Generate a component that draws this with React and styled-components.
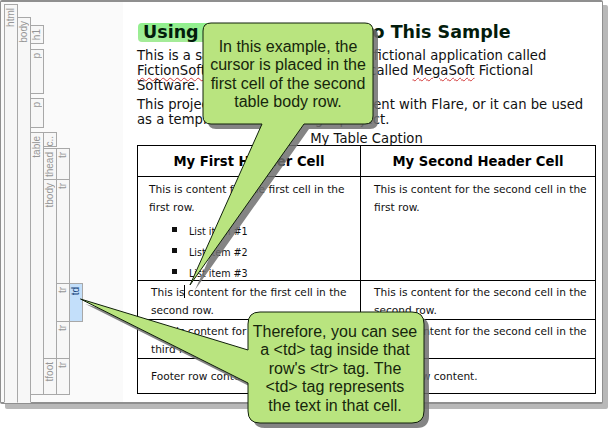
import styled, { createGlobalStyle } from "styled-components";

const GlobalStyle = createGlobalStyle`
	html, body {
		margin: 0;
		padding: 0;
		background: #fff;
	}
`;

const Page = styled.div`
	position: relative;
	width: 608px;
	height: 437px;
	overflow: hidden;
	background: #fff;
`;

const Frame = styled.div`
	display: flex;
	box-sizing: border-box;
	width: 603px;
	height: 404px;
	background: #fff;
	border: 1px solid #8f8f8f;
	border-top-width: 2px;
	border-bottom-width: 2px;
	border-radius: 2px;
	box-shadow: 5px 5px 0 #b8b8b8;
`;

const Structure = styled.div`
	display: flex;
	flex: none;
	box-sizing: border-box;
	width: 122px;
	padding-left: 3px;
	background: #fafafa;
`;

const Column = styled.div`
	display: flex;
	flex-direction: column;
	flex: none;
	width: 13px;
`;

const Gap = styled.div`
	flex: none;
	height: ${(p) => p.$h}px;
`;

const Segment = styled.div`
	display: flex;
	justify-content: center;
	align-items: flex-start;
	flex: none;
	box-sizing: border-box;
	width: 14px;
	height: ${(p) => p.$h}px;
	margin-bottom: -1px;
	padding-top: 3px;
	border: 1px solid #a8a8a8;
	border-bottom-color: ${(p) => (p.$open ? "transparent" : "#a8a8a8")};
	background: ${(p) => (p.$on ? "#c3dffa" : "#f7f7f7")};
	color: ${(p) => (p.$on ? "#17457c" : "#969696")};
`;

const SegmentLabel = styled.span`
	font: 10px/12px "Liberation Sans", Arial, sans-serif;
	white-space: nowrap;
	writing-mode: vertical-rl;
	transform: rotate(180deg);
`;

const Content = styled.div`
	flex: none;
	width: 459px;
	margin-left: 14px;
	padding-top: 21px;
	color: #111;
	font-family: "DejaVu Sans", Verdana, sans-serif;
`;

const Title = styled.h1`
	margin: 0 0 5px;
	height: 20px;
	color: #031c0c;
	font-size: 17.5px;
	font-weight: bold;
	line-height: 19px;
	white-space: nowrap;
`;

const TitleMark = styled.span`
	display: inline-block;
	margin-left: 1px;
	padding: 0 10px 0 5px;
	border-radius: 4px;
	background: linear-gradient(#90f08e, #a5eb98);
`;

const Para = styled.p`
	margin: 0 0 4px;
	font-size: 13.2px;
	line-height: 15px;
	white-space: nowrap;
`;

const Squiggle = styled.span`
	text-decoration: underline wavy #d23a3a 1px;
	text-underline-offset: 2px;
`;

const Sheet = styled.table`
	width: 458px;
	table-layout: fixed;
	border-collapse: collapse;
	color: #111;
	font-size: 10.6px;

	caption {
		height: 14px;
		font-size: 13.2px;
		line-height: 15px;
	}
`;

const Head = styled.th`
	height: 30px;
	padding: 0;
	border: 1px solid #000;
	color: #000;
	font-size: 13.2px;
	font-weight: bold;
	text-align: center;
`;

const Cell = styled.td`
	height: ${(p) => p.$h}px;
	padding: ${(p) => p.$pad || "2px 10px 0 13px"};
	border: 1px solid #000;
	line-height: 18px;
	vertical-align: top;
	white-space: nowrap;
`;

const Items = styled.ul`
	margin: 3px 0 -2px;
	padding: 0 0 0 40px;
	list-style: square;
	font-size: 9.6px;

	li {
		height: 21px;
		line-height: 21px;
	}

	li::marker {
		font-size: 16px;
	}
`;

const Caret = styled.span`
	display: inline-block;
	width: 1px;
	height: 13px;
	margin: 0 -1px -2px 0;
	background: #000;
`;

const Art = styled.svg`
	position: absolute;
	left: 0;
	top: 0;
`;

const Note = styled.div`
	position: absolute;
	left: ${(p) => p.$x}px;
	top: ${(p) => p.$y}px;
	width: ${(p) => p.$w}px;
	color: #16260c;
	font: 16px/18.4px "Liberation Sans", Arial, sans-serif;
	text-align: center;
	white-space: nowrap;
`;

// [label, top, bottom] in page pixels, one list for each nesting level
const bars = [
	[["html", 4, 402, "open"]],
	[["body", 17, 402, "open"]],
	[
		["h1", 25, 43],
		["p", 49, 93],
		["p", 98, 127],
		["table", 132, 394],
	],
	[
		["c..", 132, 146],
		["thead", 148, 179],
		["tbody", 179, 358],
		["tfoot", 358, 394],
	],
	[
		["tr", 148, 179],
		["tr", 179, 283],
		["tr", 283, 321],
		["tr", 321, 358],
		["tr", 358, 394],
	],
	[["td", 283, 321, "on"]],
];

const callouts = [
	"M211 23 H365 Q373 23 373 31 V116 Q373 124 365 124 H304 L190 285 L262 124 H211 Q203 124 203 116 V31 Q203 23 211 23 Z",
	"M260 312 H412 Q424 312 424 324 V411 Q424 423 412 423 H260 Q248 423 248 411 V383 L80.5 299 L248 350 V324 Q248 312 260 312 Z",
];

function StructureColumn({ segments }) {
	let y = 2;
	const parts = [];
	segments.forEach(([label, top, bottom, state]) => {
		if (top > y) parts.push(<Gap key={"gap" + top} $h={top - y} />);
		parts.push(
			<Segment key={top} $h={bottom - top + 1} $open={state === "open"} $on={state === "on"}>
				<SegmentLabel>{label}</SegmentLabel>
			</Segment>,
		);
		y = bottom;
	});
	return <Column>{parts}</Column>;
}

export default function App() {
	return (
		<Page>
			<GlobalStyle />
			<Frame>
				<Structure>
					{bars.map((segments, i) => (
						<StructureColumn key={i} segments={segments} />
					))}
				</Structure>
				<Content>
					<Title>
						<TitleMark>Using Tables</TitleMark> Applied to This Sample
					</Title>
					<Para>
						This is a sample project made for a fictional application called
						<br />
						<Squiggle>FictionSoft</Squiggle>, which is by a company called <Squiggle>MegaSoft</Squiggle> Fictional
						<br />
						Software.
					</Para>
					<Para>
						This project can be used to set content with Flare, or it can be used
						<br />
						as a template when starting a project.
					</Para>
					<Sheet>
						<caption>My Table Caption</caption>
						<colgroup>
							<col width="223" />
							<col width="235" />
						</colgroup>
						<thead>
							<tr>
								<Head>My First Header Cell</Head>
								<Head>My Second Header Cell</Head>
							</tr>
						</thead>
						<tbody>
							<tr>
								<Cell $h={100} $pad="3px 10px 0 11px">
									This is content for the first cell in the
									<br />
									first row.
									<Items>
										<li>List item #1</li>
										<li>List item #2</li>
										<li>List item #3</li>
									</Items>
								</Cell>
								<Cell $pad="3px 10px 0 13px">
									This is content for the second cell in the
									<br />
									first row.
								</Cell>
							</tr>
							<tr>
								<Cell $h={35}>
									This is
									<Caret /> content for the first cell in the
									<br />
									second row.
								</Cell>
								<Cell>
									This is content for the second cell in the
									<br />
									second row.
								</Cell>
							</tr>
							<tr>
								<Cell $h={35}>
									This is content for the first cell in the
									<br />
									third row.
								</Cell>
								<Cell>
									This is content for the second cell in the
									<br />
									third row.
								</Cell>
							</tr>
							<tr>
								<Cell $h={26} $pad="8px 10px 0 13px">
									Footer row content.
								</Cell>
								<Cell $pad="8px 10px 0 13px">Footer row content.</Cell>
							</tr>
						</tbody>
					</Sheet>
				</Content>
			</Frame>
			<Art width="608" height="437" viewBox="0 0 608 437">
				{callouts.map((d) => (
					<path key={d} d={d} transform="translate(5 5)" fill="#6e6e6e" opacity="0.85" />
				))}
				{callouts.map((d) => (
					<path key={d} d={d} fill="#b9e47f" stroke="#10200a" strokeWidth="1" />
				))}
			</Art>
			<Note $x={205} $y={38} $w={166}>
				In this example, the
				<br />
				cursor is placed in the
				<br />
				first cell of the second
				<br />
				table body row.
			</Note>
			<Note $x={249} $y={323} $w={172}>
				Therefore, you can see
				<br />a &lt;td&gt; tag inside that
				<br />
				row's &lt;tr&gt; tag. The
				<br />
				&lt;td&gt; tag represents
				<br />
				the text in that cell.
			</Note>
		</Page>
	);
}
